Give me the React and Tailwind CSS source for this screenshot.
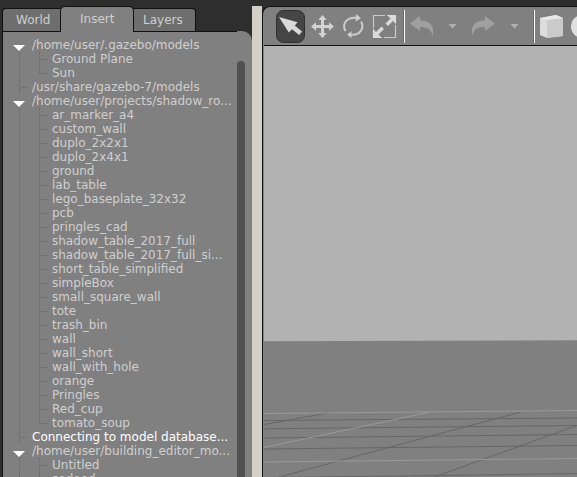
// d: 0 = root entry, 1 = child; "open" marks an expanded branch
const rows = [
  { t: '/home/user/.gazebo/models', d: 0, open: true },
  { t: 'Ground Plane', d: 1 },
  { t: 'Sun', d: 1, last: true },
  { t: '/usr/share/gazebo-7/models', d: 0 },
  { t: '/home/user/projects/shadow_ro...', d: 0, open: true },
  { t: 'ar_marker_a4', d: 1 },
  { t: 'custom_wall', d: 1 },
  { t: 'duplo_2x2x1', d: 1 },
  { t: 'duplo_2x4x1', d: 1 },
  { t: 'ground', d: 1 },
  { t: 'lab_table', d: 1 },
  { t: 'lego_baseplate_32x32', d: 1 },
  { t: 'pcb', d: 1 },
  { t: 'pringles_cad', d: 1 },
  { t: 'shadow_table_2017_full', d: 1 },
  { t: 'shadow_table_2017_full_si...', d: 1 },
  { t: 'short_table_simplified', d: 1 },
  { t: 'simpleBox', d: 1 },
  { t: 'small_square_wall', d: 1 },
  { t: 'tote', d: 1 },
  { t: 'trash_bin', d: 1 },
  { t: 'wall', d: 1 },
  { t: 'wall_short', d: 1 },
  { t: 'wall_with_hole', d: 1 },
  { t: 'orange', d: 1 },
  { t: 'Pringles', d: 1 },
  { t: 'Red_cup', d: 1 },
  { t: 'tomato_soup', d: 1, last: true },
  { t: 'Connecting to model database...', d: 0, hot: true },
  { t: '/home/user/building_editor_mo...', d: 0, open: true },
  { t: 'Untitled', d: 1 },
  { t: 'sedeed', d: 1 },
];

function Row({ r }) {
  const child = r.d === 1;
  return (
    <div className={`flex h-[14px] shrink-0 leading-[14px] whitespace-nowrap ${r.hot ? 'text-white' : 'text-[#cfcfcf]'}`}>
      <svg className={`h-[14px] shrink-0 ${child ? 'w-[49px]' : 'w-[29px]'}`} shapeRendering="crispEdges">
        {!r.open && <path d="M16.5 0V14" stroke="#636363" strokeDasharray="1 1" />}
        {!child && !r.open && <path d="M18 7.5H25" stroke="#636363" strokeDasharray="1 1" />}
        {child && <path d={r.last ? 'M36.5 0V8' : 'M36.5 0V14'} stroke="#636363" strokeDasharray="1 1" />}
        {child && <path d="M38 7.5H45" stroke="#636363" strokeDasharray="1 1" />}
        {r.open && <path d="M10 7H22L16 13Z" fill="#fff" shapeRendering="auto" />}
      </svg>
      <span>{r.t}</span>
    </div>
  );
}

function Tabs() {
  return (
    <div className="flex h-[26px] items-end text-[#cfcfcf]">
      <div className="flex h-6 w-[58px] items-center rounded-tl-[4px] border border-r-0 border-[#101010] bg-[#6e6e6e] pl-[13px]">World</div>
      <div className="flex h-[26px] w-[74px] items-center rounded-t-[5px] border border-b-0 border-[#101010] bg-[#808080] pb-[2px] pl-[19px]">Insert</div>
      <div className="flex h-6 w-[62px] items-center rounded-tr-[4px] border border-l-0 border-[#101010] bg-[#6e6e6e] pl-[9px]">Layers</div>
    </div>
  );
}

function Toolbar() {
  return (
    <svg className="block h-[38px] w-[313px] shrink-0" viewBox="264 7 313 38">
      <rect x="276.5" y="10.5" width="28" height="32" rx="7" fill="#454545" stroke="#303030" />
      <path d="M279 17L297.500 22.300L294.800 25.500L302 31.500L299.200 35L292 29.200L288.800 32.500Z" fill="#d9d9d9" />
      <path
        d="M322.500 15L326.700 20H324V25H329V22.300L334 26.500L329 30.700V28H324V33H326.700L322.500 38L318.300 33H321V28H316V30.700L311 26.500L316 22.300V25H321V20H318.300Z"
        fill="#d3d3d3"
      />
      <g fill="none" stroke="#cbcbcb" strokeWidth="2">
        <path d="M345.500 31C341.500 24.500 346.500 17 356 17.700" />
        <path d="M361 21.500C364.800 28 360 35.500 351 34.700" />
      </g>
      <path d="M356 14L361 18.300L355.500 21.500ZM351.500 31.200L347 34.500L351.500 38.300Z" fill="#cdcdcd" />
      <path d="M373.500 28V15.500H385M395.500 25V37.500H384M387 15.500H395.500V23M373.500 29V37.500H382" fill="none" stroke="#c8c8c8" strokeWidth="1.200" />
      <path d="M387 15H396V24L393 21L388 26L385.500 23.500L390.500 18.500ZM373 38V29L376 32L381.500 26.500L384 29L378.500 34.500L382 38Z" fill="#dadada" />
      <path d="M403.500 10V43M533.500 10V43" stroke="#686868" />
      <path d="M404.500 10V43M534.500 10V43" stroke="#fff" />
      <path d="M410 23.500L420 16V20.500C430 20.500 435 26 432.500 36C431 29 428 27 420 27V31Z" fill="#a0a0a0" />
      <path d="M495 23.500L485 16V20.500C475 20.500 470 26 472.500 36C474 29 477 27 485 27V31Z" fill="#a0a0a0" />
      <path d="M448.500 24H456.500L452.500 28.500ZM510.500 24H518.500L514.500 28.500Z" fill="#b0b0b0" />
      <path d="M540 18L556 15L563 18V36L547 38L540 35Z" fill="#dcdcdc" />
      <path d="M547 20L563 18V36L547 38Z" fill="#cacaca" />
      <path d="M540 18L556 15L563 18L547 20Z" fill="#e7e7e7" />
      <circle cx="582.500" cy="26.500" r="11.500" fill="#dedede" />
    </svg>
  );
}

function Scene() {
  return (
    <svg className="block h-[431px] w-[313px] shrink-0" viewBox="264 46 313 431">
      <rect x="264" y="46" width="313" height="431" fill="#b2b2b2" />
      <path d="M264 341.300L577 340.300V477H264Z" fill="#808080" />
      <g fill="none" stroke="#666" strokeWidth="1">
        <path d="M264 420.500L577 418M264 428.800L577 425.500M264 438L577 434.500M264 449L577 445.500M264 477.500L420 475.800L577 473.500" />
        <path d="M264 424.500L328 413M279 477L420 439L521 412M434 477L577 425.500" />
      </g>
      <g fill="none" stroke="#999" strokeWidth="1">
        <path d="M264 413.500L577 410.500M264 462L577 458.500M264 447.500L428 412.500" />
      </g>
    </svg>
  );
}

export default function App() {
  return (
    <div className="flex h-[477px] w-[577px] overflow-hidden bg-[#2e2e2e] font-['DejaVu_Sans',sans-serif] text-[12px]">
      <div className="flex w-[252px] shrink-0 flex-col pt-[6px] pl-[2px]">
        <Tabs />
        <div className="-mt-px flex min-h-0 flex-1 overflow-hidden rounded-tr-[10px] border-l border-[#101010] bg-[#808080]">
          <div className="flex w-[234px] shrink-0 flex-col overflow-hidden">
            <div className="flex h-[7px] shrink-0">
              <div className="h-px w-[58px] bg-[#101010]" />
              <div className="h-px w-[72px]" />
              <div className="h-px flex-1 bg-[#101010]" />
            </div>
            {rows.map((r) => <Row key={r.t} r={r} />)}
          </div>
          <div className="mt-[30px] w-2 shrink-0 rounded-t-[4px] bg-[#505050]" />
        </div>
      </div>
      <div className="mt-[6px] w-[10px] shrink-0 bg-[#d4d0c8]" />
      <div className="mt-[6px] flex min-w-0 flex-1 flex-col overflow-hidden rounded-tl-[8px] border-t border-l border-[#101010] bg-[#808080] pl-px">
        <Toolbar />
        <div className="h-px shrink-0 bg-[#101010]" />
        <Scene />
      </div>
    </div>
  );
}
